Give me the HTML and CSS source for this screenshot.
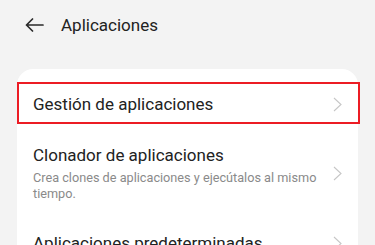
FILE: index.html
```html
<!DOCTYPE html>
<html lang="es">
<head>
  <meta charset="UTF-8" />
  <meta name="viewport" content="width=device-width, initial-scale=1.0" />
  <title>Aplicaciones</title>
  <link rel="stylesheet" href="styles.css">
</head>
<body>

  <!-- barra superior -->
  <header class="topbar">
    <svg class="back" width="20" height="14" viewBox="0 0 20 14">
      <path d="M19 7H2.5M8.5 1L2.5 7l6 6" fill="none" stroke="#2a2a2a" stroke-width="1.7" stroke-linecap="round" stroke-linejoin="round"/>
    </svg>
    <span class="topbar-title">Aplicaciones</span>
  </header>

  <main class="card">
    <div class="highlight"></div>

    <div class="row row-first">
      <div class="row-text">
        <div class="row-title">Gestión de aplicaciones</div>
      </div>
      <svg class="chevron" width="9" height="15" viewBox="0 0 9 15"><path d="M1 1l7 6.5L1 14" fill="none" stroke="#c6c6c6" stroke-width="1.1"/></svg>
    </div>

    <div class="row row-sub">
      <div class="row-text">
        <div class="row-title">Clonador de aplicaciones</div>
        <div class="row-desc">Crea clones de aplicaciones y ejecútalos al mismo tiempo.</div>
      </div>
      <svg class="chevron" width="9" height="15" viewBox="0 0 9 15"><path d="M1 1l7 6.5L1 14" fill="none" stroke="#c6c6c6" stroke-width="1.1"/></svg>
    </div>

    <div class="row row-last">
      <div class="row-text">
        <div class="row-title">Aplicaciones predeterminadas</div>
      </div>
      <svg class="chevron" width="9" height="15" viewBox="0 0 9 15"><path d="M1 1l7 6.5L1 14" fill="none" stroke="#c6c6c6" stroke-width="1.1"/></svg>
    </div>
  </main>

</body>
</html>
```

FILE: styles.css
```css
html, body {
  margin: 0;
  padding: 0;
  width: 100%;
  height: 100%;
  overflow: hidden;
  font-family: "Roboto", "Noto Sans", sans-serif;
  background-color: #f3f3f3;
  color: #222;
}

.topbar {
  height: 50px;
  display: flex;
  align-items: center;
  padding-left: 24px;
  gap: 17px;
}

.topbar-title {
  font-size: 17px;
  color: #222;
}

.card {
  position: relative;
  margin: 19px 17px 0;
  padding-top: 14px;
  background: #fff;
  border-radius: 16px;
  height: 300px;
}

.highlight {
  position: absolute;
  left: 0;
  right: -2px;
  top: 13px;
  height: 42px;
  border: 2.5px solid #ec1c24;
  box-sizing: border-box;
}

.row {
  display: flex;
  align-items: center;
  padding: 0 16px;
  gap: 6px;
}

.row-text {
  flex: 1;
}

.row-first {
  height: 42px;
}

.row-sub {
  padding-top: 20px;
  padding-bottom: 11px;
}

.row-last {
  padding-top: 20px;
}

.row-title {
  font-size: 17px;
  line-height: 20px;
}

.row-desc {
  font-size: 12.7px;
  line-height: 16px;
  color: #8a8a8a;
  margin-top: 5px;
}

.chevron {
  flex: none;
}
```
